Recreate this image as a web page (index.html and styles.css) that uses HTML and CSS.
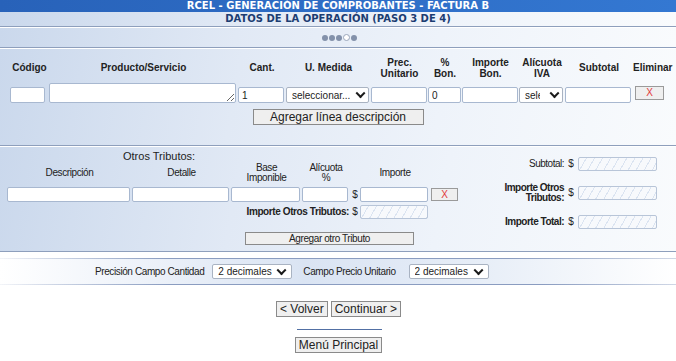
FILE: index.html
```html
<!DOCTYPE html>
<html lang="es">

<head>
  <meta charset="UTF-8">
  <meta name="viewport" content="width=device-width, initial-scale=1.0">
  <title>RCEL - Datos de la operación</title>
  <link rel="stylesheet" href="styles.css">
</head>

<body>
  <div class="titlebar">RCEL - GENERACIÓN DE COMPROBANTES - FACTURA B</div>
  <div class="subtitle">DATOS DE LA OPERACIÓN (PASO 3 DE 4)</div>
  <div class="steps">
    <span class="dot"></span><span class="dot"></span><span class="dot"></span><span class="dot current"></span><span class="dot"></span>
  </div>

  <!-- Detalle de productos / servicios -->
  <div class="panel items">
    <div class="items-grid">
      <div class="col-head">Código</div>
      <div class="col-head">Producto/Servicio</div>
      <div class="col-head">Cant.</div>
      <div class="col-head">U. Medida</div>
      <div class="col-head">Prec.<br>Unitario</div>
      <div class="col-head">%<br>Bon.</div>
      <div class="col-head">Importe<br>Bon.</div>
      <div class="col-head">Alícuota<br>IVA</div>
      <div class="col-head">Subtotal</div>
      <div class="col-head">Eliminar</div>

      <input type="text" class="field w-cod">
      <textarea class="field w-prod"></textarea>
      <input type="text" class="field w-cant" value="1">
      <span class="sel">
        <select class="field w-um">
          <option>seleccionar...</option>
        </select>
      </span>
      <input type="text" class="field w-prec">
      <input type="text" class="field w-bon" value="0">
      <input type="text" class="field w-ibon">
      <span class="sel">
        <select class="field w-iva">
          <option>seleccionar...</option>
        </select>
      </span>
      <input type="text" class="field w-sub">
      <button class="btn-del">X</button>
    </div>
    <div class="center-row">
      <button class="btn btn-add">Agregar línea descripción</button>
    </div>
  </div>

  <!-- Otros tributos y totales -->
  <div class="panel tributos">
    <div class="trib-grid">
      <div class="trib-title">Otros Tributos:</div>

      <div class="trib-head">Descripción</div>
      <div class="trib-head">Detalle</div>
      <div class="trib-head">Base<br>Imponible</div>
      <div class="trib-head">Alícuota<br>%</div>
      <div></div>
      <div class="trib-head">Importe</div>
      <div></div>

      <input type="text" class="field t-desc">
      <input type="text" class="field t-det">
      <input type="text" class="field t-base">
      <input type="text" class="field t-alic">
      <span class="cur">$</span>
      <input type="text" class="field t-imp">
      <button class="btn-del small">X</button>

      <div class="trib-sum">Importe Otros Tributos:</div>
      <span class="cur">$</span>
      <input type="text" class="field locked t-imp" disabled>
      <div></div>

      <div class="trib-add">
        <button class="btn btn-small">Agregar otro Tributo</button>
      </div>
    </div>

    <div class="totals">
      <div class="tot-label">Subtotal:</div>
      <span class="cur">$</span>
      <input type="text" class="field locked" disabled>

      <div class="tot-label strong">Importe Otros Tributos:</div>
      <span class="cur">$</span>
      <input type="text" class="field locked" disabled>

      <div class="tot-label strong">Importe Total:</div>
      <span class="cur">$</span>
      <input type="text" class="field locked" disabled>
    </div>
  </div>

  <div class="precision">
    <span>Precisión Campo Cantidad</span>
    <span class="sel first">
      <select class="field prec-sel">
        <option>2 decimales</option>
      </select>
    </span>
    <span class="gap-label">Campo Precio Unitario</span>
    <span class="sel second">
      <select class="field prec-sel">
        <option>2 decimales</option>
      </select>
    </span>
  </div>

  <div class="nav">
    <button class="btn">&lt; Volver</button>
    <button class="btn">Continuar &gt;</button>
  </div>
  <div class="divider"></div>
  <div class="nav menu">
    <button class="btn">Menú Principal</button>
  </div>
</body>

</html>
```

FILE: styles.css
```css
body {
  margin: 0;
  font-family: "Liberation Sans", Arial, sans-serif;
  font-size: 10px;
  color: #222;
  background-color: #ffffff;
}

/* Encabezado */
.titlebar {
  height: 12px;
  line-height: 12px;
  background: linear-gradient(to right, #2862b9, #3478d2);
  color: #ffffff;
  font-family: "DejaVu Sans", Verdana, sans-serif;
  font-weight: bold;
  font-size: 10px;
  text-align: center;
}

.subtitle,
.steps,
.panel {
  background: linear-gradient(100deg, #cad8ec 0%, #e1e9f5 35%, #eef3fa 65%, #f9fbfd 100%);
  border-bottom: 1px solid #8e9fbc;
}

.subtitle {
  height: 14px;
  line-height: 14px;
  color: #1c3d72;
  font-family: "DejaVu Sans", Verdana, sans-serif;
  font-weight: bold;
  font-size: 10px;
  text-align: center;
}

.steps {
  height: 19px;
  border-top: 1px solid #ffffff;
  display: flex;
  justify-content: center;
  align-items: center;
  gap: 1px;
  padding-left: 2px;
}

.dot {
  width: 6px;
  height: 6px;
  border-radius: 50%;
  background-color: #8391aa;
}

.dot.current {
  width: 5px;
  height: 5px;
  background-color: #ffffff;
  border: 1px solid #9aa6bb;
  border-radius: 50%;
}

.panel {
  border-top: 1px solid #ffffff;
}

/* Campos */
.field {
  box-sizing: border-box;
  height: 16px;
  padding: 0 3px;
  border: 1px solid #a8b8d0;
  border-radius: 2px;
  background-color: #ffffff;
  font-family: "Liberation Sans", Arial, sans-serif;
  font-size: 10px;
  color: #222;
  margin: 0;
}

select.field {
  appearance: none;
  -webkit-appearance: none;
  padding: 0 18px 0 5px;
  border-color: #a9b3c2;
  display: block;
}

/* select con flecha propia */
.sel {
  position: relative;
  display: inline-block;
}

.sel::after {
  content: "";
  position: absolute;
  right: 7px;
  top: 50%;
  width: 5px;
  height: 5px;
  border-right: 2px solid #1a1a1a;
  border-bottom: 2px solid #1a1a1a;
  transform: translateY(-75%) rotate(45deg);
  pointer-events: none;
}

.field.locked {
  background: repeating-linear-gradient(120deg, #f7f9fc 0 6px, #dbe4f1 6px 7px);
  border-color: #b8c5d8;
}

.btn {
  height: 16px;
  padding: 0 3px;
  border: 1px solid #8a8a8a;
  background-color: #efefef;
  font-family: "Liberation Sans", Arial, sans-serif;
  font-size: 12px;
  color: #222;
  line-height: 14px;
}

.btn-del {
  width: 29px;
  height: 14px;
  padding: 0;
  border: 1px solid #9a9a9a;
  background-color: #efefef;
  color: #e23b3b;
  font-family: "Liberation Sans", Arial, sans-serif;
  font-size: 10px;
  line-height: 12px;
}

/* Items */
.items {
  height: 98px;
  padding-top: 7px;
  box-sizing: border-box;
  padding-left: 10px;
}

.items-grid {
  display: grid;
  grid-template-columns: 39px 189px 48px 85px 57px 34px 57px 46px 68px 36px;
  grid-template-rows: 23px 24px;
}

.col-head {
  font-weight: bold;
  text-align: center;
  line-height: 11px;
  align-self: center;
}

.items-grid .field,
.items-grid .sel {
  align-self: end;
}

.w-cod { width: 35px; }
.w-prod { width: 187px; height: 20px; padding: 0; }
.w-cant { width: 46px; }
.w-um { width: 83px; }
.w-prec { width: 56px; }
.w-bon { width: 33px; }
.w-ibon { width: 56px; }
.items-grid select.w-iva { width: 44px; padding: 0 22px 0 5px; }
.w-sub { width: 66px; }

.items-grid .btn-del {
  align-self: end;
  margin: 0 0 3px 2px;
}

.center-row {
  display: flex;
  justify-content: center;
  margin-top: 6px;
  padding-right: 10px;
}

.btn-add {
  width: 171px;
  height: 16px;
}

/* Otros tributos */
.tributos {
  height: 106px;
  box-sizing: border-box;
  padding: 4px 19px 0 7px;
  display: flex;
  justify-content: space-between;
}

.trib-grid {
  display: grid;
  grid-template-columns: 125px 99px 71px 48px 10px 70px 30px;
  grid-template-rows: 11px 21px 19px 17px 26px;
  letter-spacing: -0.4px;
}

.trib-title {
  grid-column: 1 / -1;
  padding-left: 116px;
  font-size: 11px;
  line-height: 11px;
  letter-spacing: 0;
}

.trib-head {
  text-align: center;
  line-height: 10px;
  align-self: center;
}

.trib-grid .field {
  align-self: end;
  height: 15px;
}

.t-desc { width: 123px; }
.t-det { width: 97px; }
.t-base { width: 69px; }
.t-alic { width: 46px; }
.t-imp { width: 68px; }

.trib-grid .field.locked {
  height: 14px;
}

.cur {
  align-self: end;
  text-align: center;
  line-height: 14px;
  letter-spacing: 0;
}

.trib-grid .btn-del {
  align-self: end;
  width: 27px;
  height: 13px;
  margin: 0 0 1px 1px;
  line-height: 11px;
}

.trib-sum {
  grid-column: 1 / 5;
  align-self: end;
  text-align: right;
  font-weight: bold;
  line-height: 14px;
  padding-right: 1px;
}

.trib-add {
  grid-column: 1 / -1;
  align-self: end;
  padding-left: 238px;
}

.btn-small {
  width: 169px;
  height: 13px;
  font-size: 10px;
  line-height: 11px;
  letter-spacing: -0.4px;
}

/* Totales */
.totals {
  display: grid;
  grid-template-columns: 62px 14px 79px;
  grid-auto-rows: 14px;
  row-gap: 15px;
  margin-top: 6px;
  letter-spacing: -0.5px;
}

.tot-label {
  text-align: right;
  align-self: center;
  line-height: 10px;
}

.tot-label.strong {
  font-weight: bold;
}

.totals .cur {
  align-self: center;
}

.totals .field {
  width: 79px;
  height: 14px;
}

/* Precision */
.precision {
  margin-top: 6px;
  height: 27px;
  display: flex;
  align-items: center;
  padding-left: 95px;
  letter-spacing: -0.4px;
  background:
    linear-gradient(to right, rgba(138, 156, 192, 0.1), #8a9cc0 25%, #8a9cc0 75%, rgba(138, 156, 192, 0.4)) top / 100% 1px no-repeat,
    linear-gradient(to right, rgba(138, 156, 192, 0.1), #8a9cc0 25%, #8a9cc0 80%, rgba(138, 156, 192, 0.4)) bottom / 100% 1px no-repeat,
    linear-gradient(to right, #ffffff 0%, #dae4f3 45%, #e6edf7 70%, #ffffff 100%);
}

.prec-sel {
  height: 15px;
  letter-spacing: 0;
  width: 80px;
}

.sel.first {
  margin-left: 8px;
}

.sel.second {
  margin-left: 13px;
}

.gap-label {
  margin-left: 11px;
}

/* Navegacion */
.nav {
  display: flex;
  justify-content: center;
  gap: 3px;
  margin-top: 16px;
  padding-left: 1px;
}

.divider {
  width: 85px;
  height: 1px;
  background-color: #5270a4;
  margin: 12px auto 0;
  position: relative;
  left: 1px;
}

.nav.menu {
  margin-top: 7px;
}
```
